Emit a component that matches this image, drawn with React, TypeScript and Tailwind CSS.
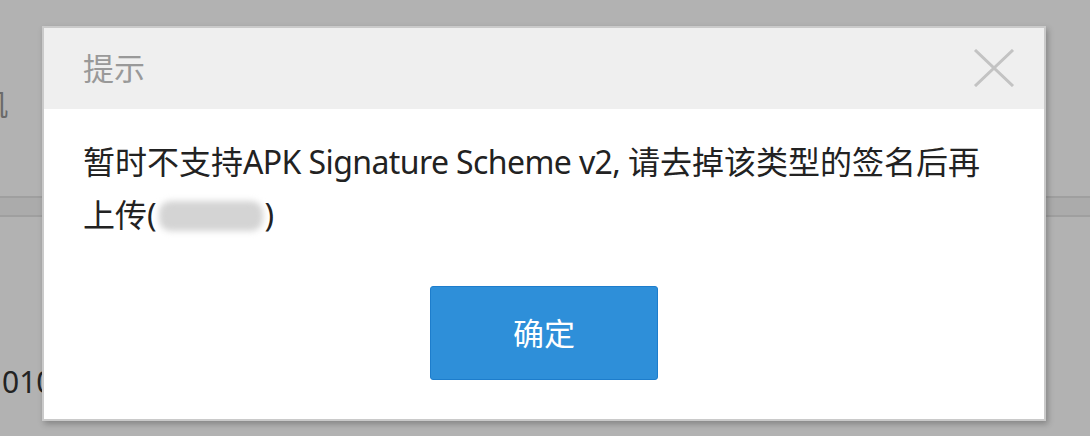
export default function App() {
  return (
    <div
      className="relative h-[436px] w-[1090px] overflow-hidden bg-white"
      style={{ fontFamily: '"Noto Sans", "Noto Sans CJK SC", sans-serif' }}
    >
      {/* page underneath the mask */}
      <div className="flex flex-col">
        <div className="mt-[84px] ml-[-22px] h-[40px] text-[30px] leading-[40px] text-[#999]">机</div>
        <div className="mt-[72px] h-[21px] border-y-2 border-[#e4e4e4] bg-[#f5f5f5]" />
        <div className="mt-[150px] ml-[2px] text-[30px] leading-[30px] text-[#333]">010</div>
      </div>

      {/* mask */}
      <div className="absolute inset-0 bg-black/30">
        <div className="absolute left-[42px] top-[26px] flex h-[395px] w-[1004px] flex-col border-2 border-[#cacaca] bg-white shadow-[2px_3px_6px_rgba(0,0,0,0.25)]">
          <div className="flex h-[81px] items-center justify-between bg-[#efefef] pl-[39px] pr-[29px]">
            <span className="text-[31px] text-[#999]">提示</span>
            <svg width="42" height="38" viewBox="0 0 42 38" className="mt-[-2px]">
              <path d="M2 1 L40 37 M40 1 L2 37" stroke="#c3c3c3" strokeWidth="3" fill="none" />
            </svg>
          </div>
          <div className="flex flex-1 flex-col px-[39px] pt-[26px]">
            <p className="text-[32px] leading-[53px] text-[#222]">
              暂时不支持<span className="tracking-[-0.6px]">APK Signature Scheme v2, </span>请去掉该类型的签名后再
              <br />
              上传(
              <span className="mx-[2px] inline-block h-[30px] w-[104px] translate-y-[4px] rounded-[12px] bg-[#d4d4d4] blur-[3px]" />
              )
            </p>
            <div className="mt-[45px] flex justify-center">
              <button className="h-[94px] w-[228px] rounded-[3px] border border-[#1d7dcc] bg-[#2e8fd9] text-[31px] text-white">
                确定
              </button>
            </div>
          </div>
        </div>
      </div>
    </div>
  );
}
